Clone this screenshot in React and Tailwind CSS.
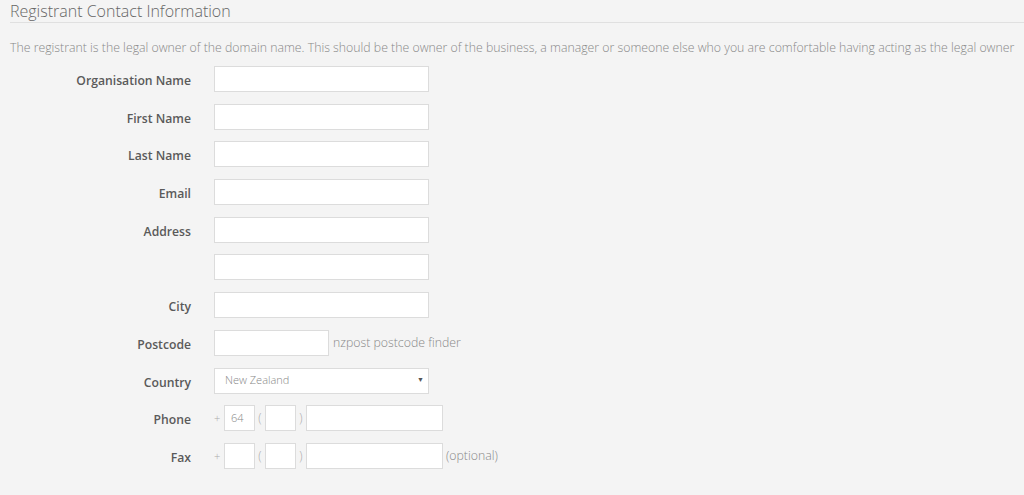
import React from "react";

const font = { fontFamily: '"Open Sans", sans-serif' };

function Label({ children }) {
  return (
    <div className="w-[191px] shrink-0 pt-[4px] text-right text-[12.2px] font-semibold text-[#5a5a5a] leading-[26px]">
      {children}
    </div>
  );
}

function Box({ className = "" }) {
  return <div className={"h-[26px] bg-white border border-[#dcdcdc] " + className} />;
}

function Row({ label, children }) {
  return (
    <div className="flex items-center h-[26px]">
      <Label>{label}</Label>
      <div className="ml-[23px] flex items-center h-[26px]">{children}</div>
    </div>
  );
}

export default function App() {
  return (
    <div className="w-[1024px] h-[495px] bg-[#f4f4f4] overflow-hidden" style={font}>
      <div className="pl-[10px]">
        <div className="h-[23px] pt-[1px] border-b border-[#e0e0e0] text-[16px] font-light text-[#666] leading-[21px]">
          Registrant Contact Information
        </div>
        <p className="mt-[16px] text-[12.3px] font-light text-[#888] leading-[18px] whitespace-nowrap">
          The registrant is the legal owner of the domain name. This should be the owner of the business, a manager or someone else who you are comfortable having acting as the legal owner
        </p>
      </div>
      <div className="mt-[9px] flex flex-col gap-[11.7px]">
        <Row label="Organisation Name"><Box className="w-[215px]" /></Row>
        <Row label="First Name"><Box className="w-[215px]" /></Row>
        <Row label="Last Name"><Box className="w-[215px]" /></Row>
        <Row label="Email"><Box className="w-[215px]" /></Row>
        <Row label="Address"><Box className="w-[215px]" /></Row>
        <Row label=""><Box className="w-[215px]" /></Row>
        <Row label="City"><Box className="w-[215px]" /></Row>
        <Row label="Postcode">
          <Box className="w-[115px]" />
          <span className="ml-[4px] text-[12.3px] font-light text-[#888]">nzpost postcode finder</span>
        </Row>
        <Row label="Country">
          <div className="w-[215px] h-[26px] bg-white border border-[#dcdcdc] flex items-center justify-between pl-[10px] pr-[4px]">
            <span className="text-[11px] font-light text-[#888]">New Zealand</span>
            <span className="text-[7px] text-[#555]">▼</span>
          </div>
        </Row>
        <Row label="Phone">
          <span className="w-[10px] text-[11px] font-light text-[#aaa]">+</span>
          <div className="w-[31px] h-[26px] bg-white border border-[#dcdcdc] flex items-center pl-[6px] text-[11px] font-light text-[#888]">64</div>
          <span className="w-[10px] text-center text-[12px] font-light text-[#aaa]">(</span>
          <Box className="w-[31px]" />
          <span className="w-[10px] text-center text-[12px] font-light text-[#aaa]">)</span>
          <Box className="w-[137px]" />
        </Row>
        <Row label="Fax">
          <span className="w-[10px] text-[11px] font-light text-[#aaa]">+</span>
          <Box className="w-[31px]" />
          <span className="w-[10px] text-center text-[12px] font-light text-[#aaa]">(</span>
          <Box className="w-[31px]" />
          <span className="w-[10px] text-center text-[12px] font-light text-[#aaa]">)</span>
          <Box className="w-[137px]" />
          <span className="ml-[3px] text-[12.3px] font-light text-[#888]">(optional)</span>
        </Row>
      </div>
    </div>
  );
}
